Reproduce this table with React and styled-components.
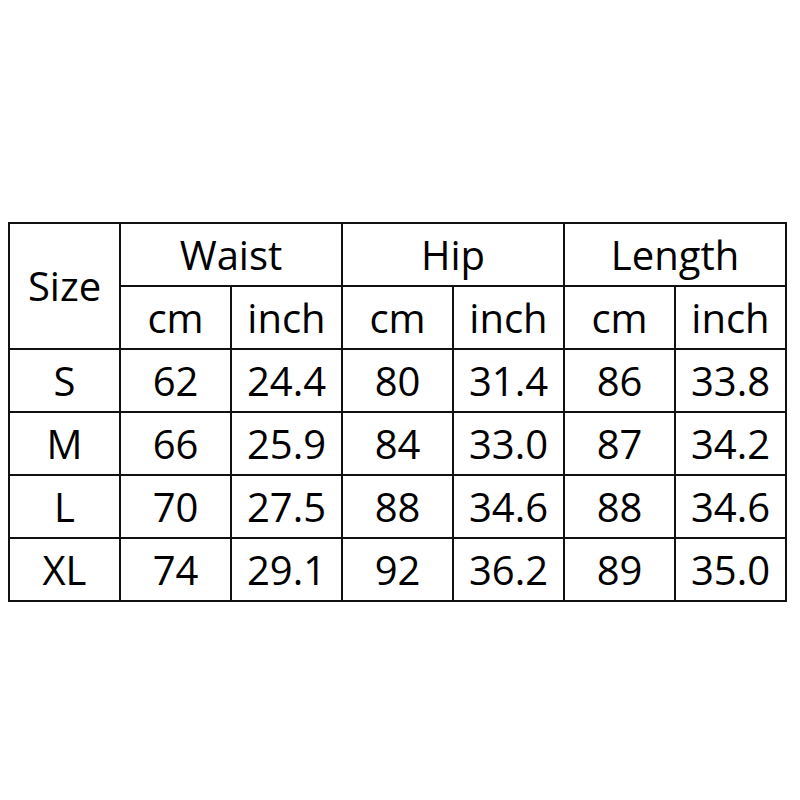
import React from "react";
import styled, { createGlobalStyle } from "styled-components";

const GlobalStyle = createGlobalStyle`
  html, body {
    margin: 0;
    padding: 0;
    background: #fff;
  }
`;

const rows = [
  ["S", "62", "24.4", "80", "31.4", "86", "33.8"],
  ["M", "66", "25.9", "84", "33.0", "87", "34.2"],
  ["L", "70", "27.5", "88", "34.6", "88", "34.6"],
  ["XL", "74", "29.1", "92", "36.2", "89", "35.0"],
];

function App() {
  return (
    <Page>
      <GlobalStyle />
      <SizeTable>
        <tbody>
          <tr>
            <Cell rowSpan={2}>Size</Cell>
            <Cell colSpan={2}>Waist</Cell>
            <Cell colSpan={2}>Hip</Cell>
            <Cell colSpan={2}>Length</Cell>
          </tr>
          <tr>
            <Cell>cm</Cell>
            <Cell>inch</Cell>
            <Cell>cm</Cell>
            <Cell>inch</Cell>
            <Cell>cm</Cell>
            <Cell>inch</Cell>
          </tr>
          {rows.map((r, i) => (
            <tr key={i}>
              {r.map((v, j) => (
                <Cell key={j}>{v}</Cell>
              ))}
            </tr>
          ))}
        </tbody>
      </SizeTable>
    </Page>
  );
}

export default App;

const Page = styled.div`
  width: 800px;
  height: 800px;
  padding-top: 222px;
  padding-left: 8px;
  box-sizing: border-box;
`;

const SizeTable = styled.table`
  border-collapse: collapse;
  width: 779px;
  table-layout: fixed;
  font-family: "Open Sans", "Liberation Sans", sans-serif;
  color: #000;

  tr {
    height: 63px;
  }
`;

const Cell = styled.td`
  border: 2px solid #111;
  text-align: center;
  vertical-align: middle;
  font-size: 40px;
  padding: 0;
  line-height: 1;
`;
